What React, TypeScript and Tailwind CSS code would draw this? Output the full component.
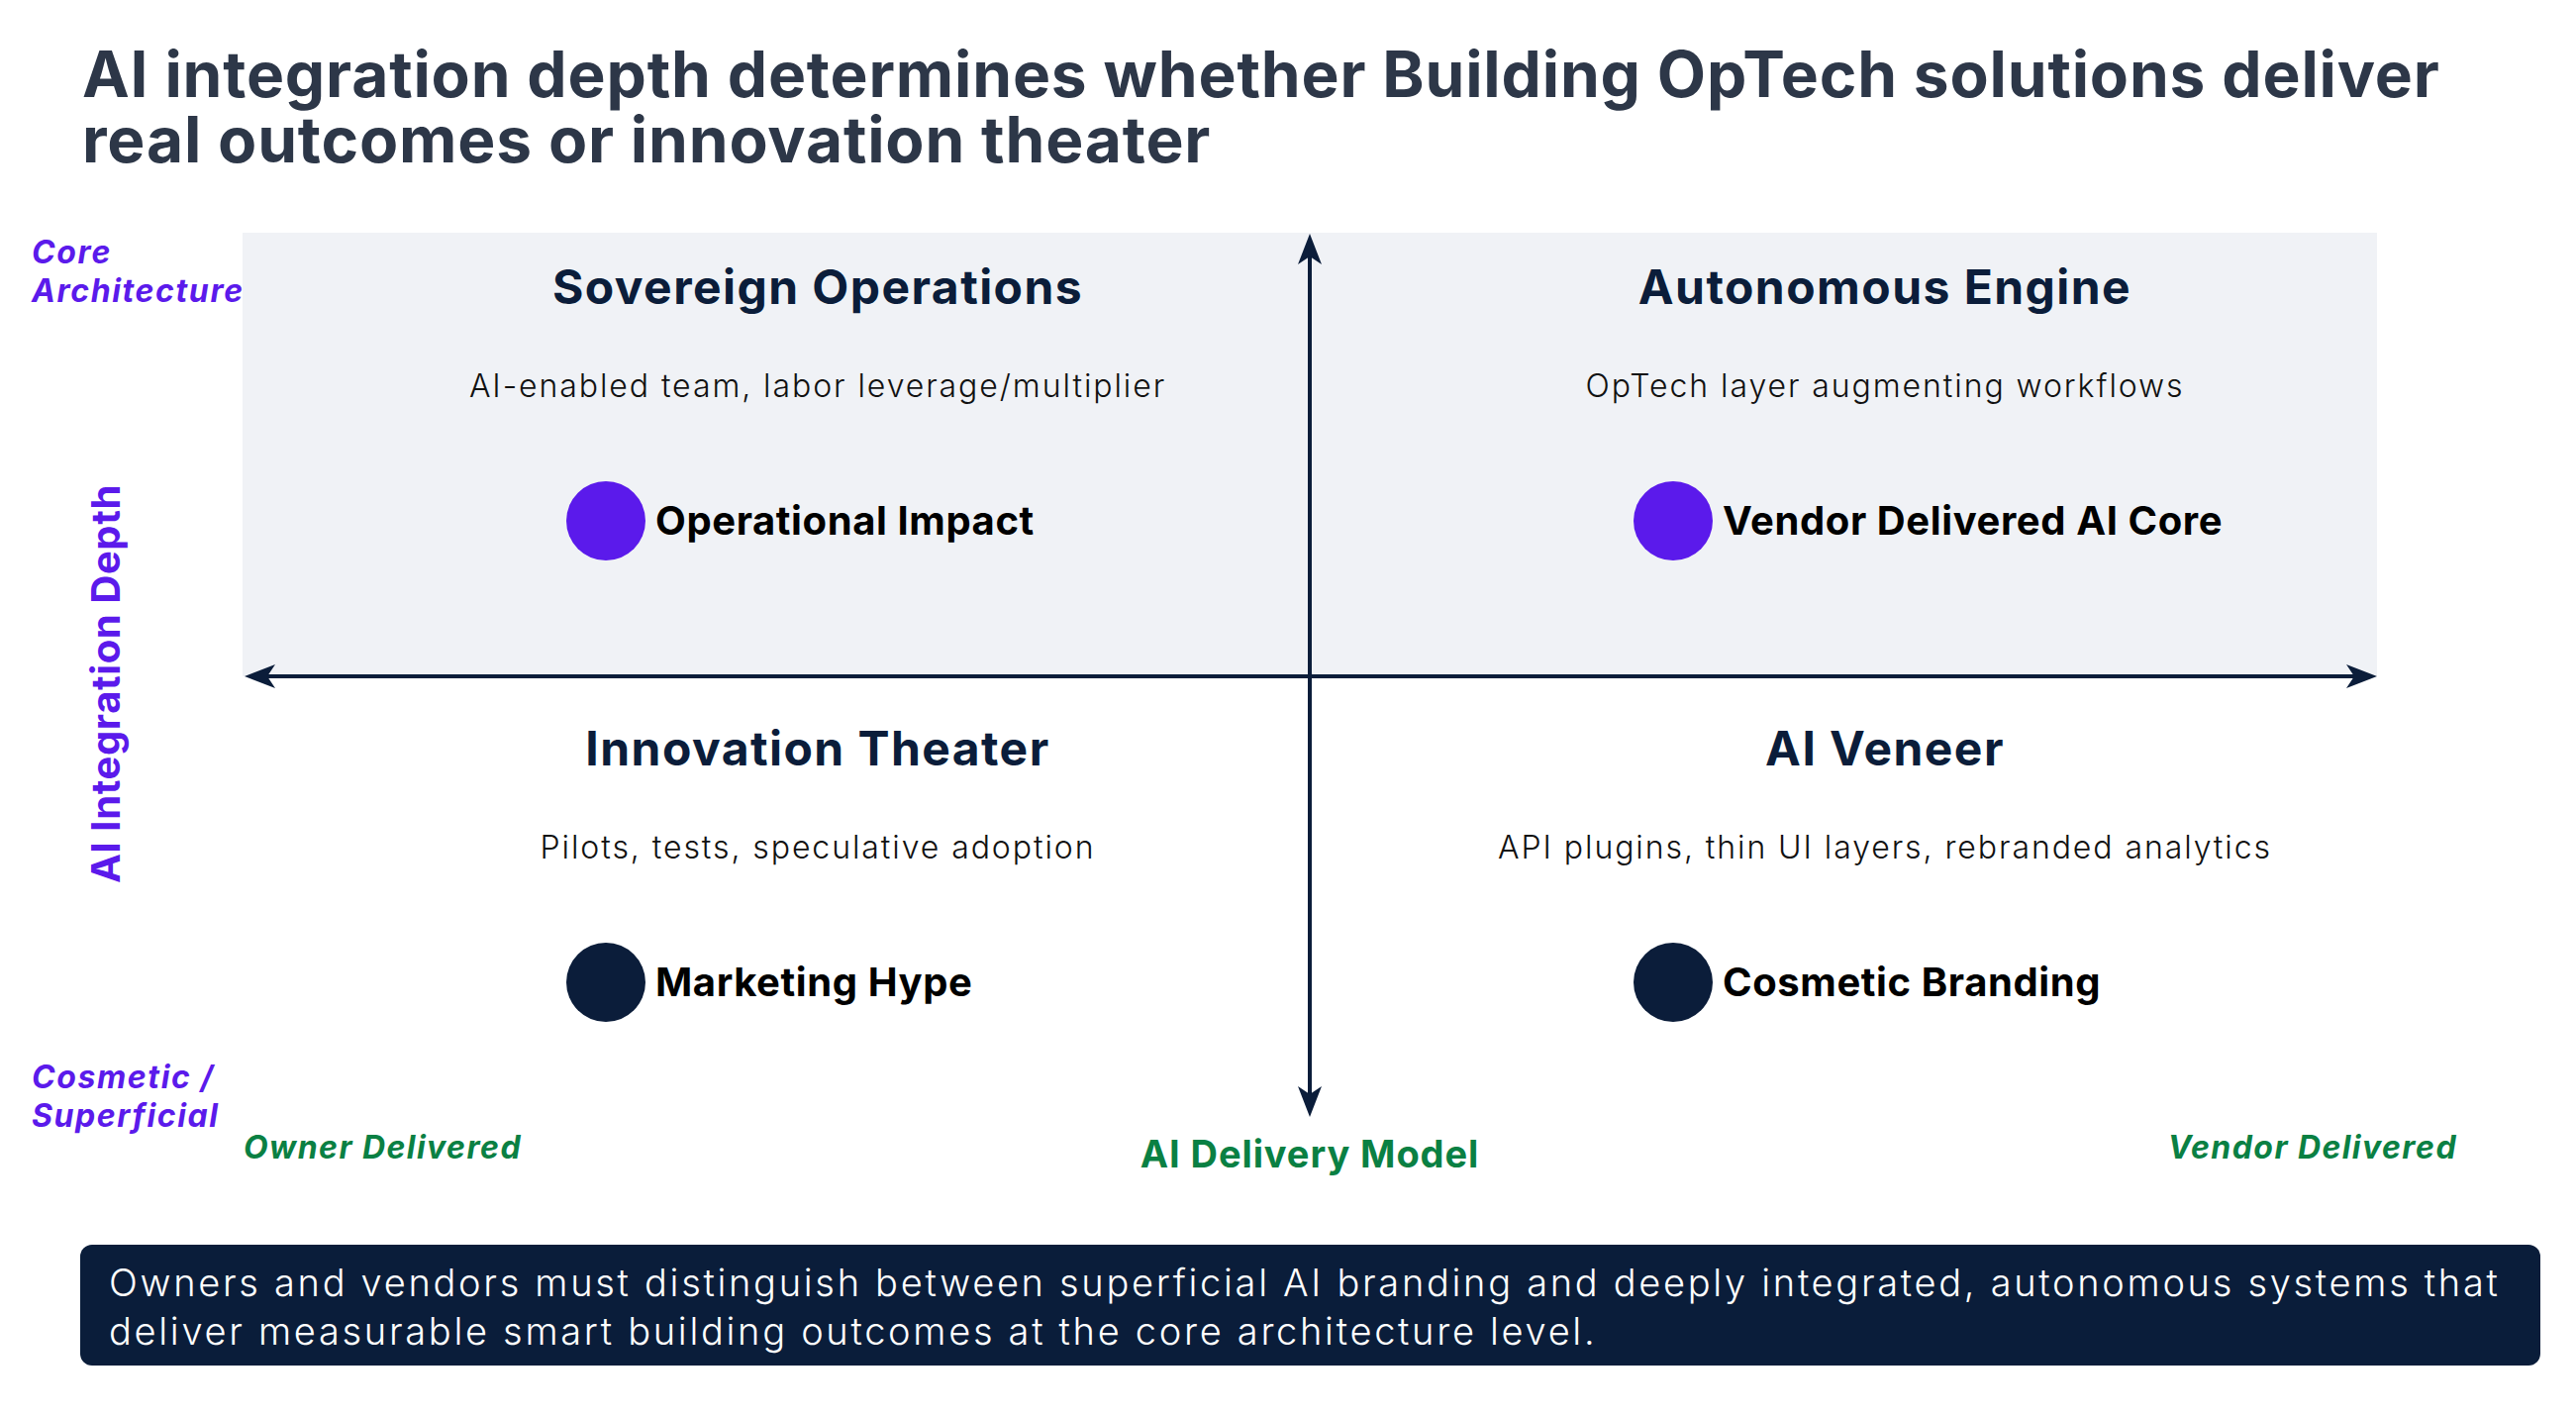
import React from 'react';

const navy = '#0b1d3a';

type Quad = {
  title: string;
  subtitle: string;
  item: string;
  dot: 'purple' | 'navy';
  top: boolean;
};

const quads: Quad[] = [
  { title: 'Sovereign Operations', subtitle: 'AI-enabled team, labor leverage/multiplier', item: 'Operational Impact', dot: 'purple', top: true },
  { title: 'Autonomous Engine', subtitle: 'OpTech layer augmenting workflows', item: 'Vendor Delivered AI Core', dot: 'purple', top: true },
  { title: 'Innovation Theater', subtitle: 'Pilots, tests, speculative adoption', item: 'Marketing Hype', dot: 'navy', top: false },
  { title: 'AI Veneer', subtitle: 'API plugins, thin UI layers, rebranded analytics', item: 'Cosmetic Branding', dot: 'navy', top: false },
];

const Quadrant = ({ q }: { q: Quad }) => (
  <div className={q.top ? 'bg-[#f0f2f6] pl-[84px] pt-[31px]' : 'pl-[84px] pt-[49px]'}>
    <div className="flex flex-col items-center">
      <h2 className="text-[48px] leading-[48px] font-bold tracking-[0.03em] text-[#0b1d3a] whitespace-nowrap">{q.title}</h2>
      <p className="mt-[60px] text-[32px] leading-[32px] font-light tracking-[0.06em] text-[#111111] whitespace-nowrap">{q.subtitle}</p>
      <div className="mt-[80px] w-[508px] flex items-center gap-[10px]">
        <span className={q.dot === 'purple' ? 'w-[80px] h-[80px] rounded-full bg-[#5b1aeb] shrink-0' : 'w-[80px] h-[80px] rounded-full bg-[#0b1d3a] shrink-0'} />
        <span className="text-[40px] leading-[40px] font-bold tracking-[0.015em] text-black whitespace-nowrap">{q.item}</span>
      </div>
    </div>
  </div>
);

const Axes = () => (
  <svg className="absolute inset-0 pointer-events-none" width="2156" height="893" viewBox="0 0 2156 893">
    <line x1="1078" y1="20" x2="1078" y2="874" stroke={navy} strokeWidth="4" />
    <line x1="20" y1="448" x2="2138" y2="448" stroke={navy} strokeWidth="4" />
    <path d="M1078 1 L1090 32 L1078 24 L1066 32 Z" fill={navy} />
    <path d="M1078 893 L1090 862 L1078 870 L1066 862 Z" fill={navy} />
    <path d="M2 448 L33 436 L25 448 L33 460 Z" fill={navy} />
    <path d="M2156 448 L2125 436 L2133 448 L2125 460 Z" fill={navy} />
  </svg>
);

export default function App() {
  return (
    <div className="w-[2602px] h-[1432px] bg-white overflow-hidden font-['Inter',sans-serif]">
      <h1 className="pl-[83px] pt-[42px] text-[64px] leading-[66px] font-bold text-[#2d3748] tracking-[0.013em] whitespace-nowrap">
        AI integration depth determines whether Building OpTech solutions deliver
        <br />
        real outcomes or innovation theater
      </h1>

      <div className="mt-[61px] flex h-[893px]">
        {/* y-axis labels */}
        <div className="w-[245px] shrink-0 flex flex-col justify-between pl-[32px] text-[#5b1aeb]">
          <div className="text-[32px] leading-[39px] font-bold italic tracking-[0.05em] whitespace-nowrap">
            Core
            <br />
            Architecture
          </div>
          <div className="ml-[55px] [writing-mode:vertical-rl] rotate-180 text-[40px] leading-[40px] font-bold tracking-[0.015em] whitespace-nowrap">
            AI Integration Depth
          </div>
          <div className="mb-[-18px] text-[32px] leading-[39px] font-bold italic tracking-[0.05em] whitespace-nowrap">
            Cosmetic /
            <br />
            Superficial
          </div>
        </div>

        {/* quadrant chart */}
        <div className="relative w-[2156px] grid grid-cols-2 grid-rows-[448px_445px]">
          {quads.map((q) => (
            <Quadrant key={q.title} q={q} />
          ))}
          <Axes />
        </div>
      </div>

      {/* x-axis labels */}
      <div className="mt-[15px] ml-[164px] w-[2318px] h-[41px] grid grid-cols-[1fr_auto_1fr] items-start text-[#0a8043] font-bold">
        <div className="pl-[82px] text-[32px] leading-[32px] italic tracking-[0.045em] whitespace-nowrap">Owner Delivered</div>
        <div className="pt-[3px] text-[38px] leading-[38px] tracking-[0.024em] whitespace-nowrap">AI Delivery Model</div>
        <div className="text-right text-[32px] leading-[32px] italic tracking-[0.045em] whitespace-nowrap">Vendor Delivered</div>
      </div>

      {/* takeaway */}
      <div className="mt-[73px] ml-[81px] w-[2485px] h-[122px] rounded-[12px] bg-[#0a1d3a] pl-[29px] pt-[14px] text-white text-[38px] leading-[49px] font-light tracking-[0.071em] whitespace-nowrap">
        Owners and vendors must distinguish between superficial AI branding and deeply integrated, autonomous systems that
        <br />
        deliver measurable smart building outcomes at the core architecture level.
      </div>
    </div>
  );
}
